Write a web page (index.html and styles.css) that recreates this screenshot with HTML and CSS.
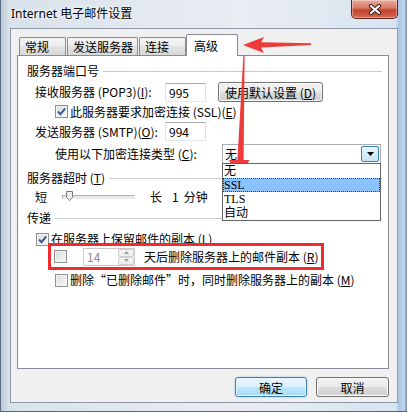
FILE: index.html
```html
<!DOCTYPE html>
<html lang="zh-CN">
<head>
<meta charset="utf-8">
<title>Internet 电子邮件设置</title>
<link rel="stylesheet" href="styles.css">
</head>
<body>
<div class="window">
  <div class="titlebar">
    <span class="title">Internet 电子邮件设置</span>
    <div class="close">
      <svg width="14" height="11" viewBox="0 0 14 11"><path d="M3 2 L11 9 M11 2 L3 9" stroke="#3a1b18" stroke-width="4.2" stroke-linecap="round" fill="none"/><path d="M3 2 L11 9 M11 2 L3 9" stroke="#ffffff" stroke-width="2.2" stroke-linecap="round" fill="none"/></svg>
    </div>
  </div>
  <div class="dialog">
    <div class="tabs">
      <div class="tab">常规</div>
      <div class="tab">发送服务器</div>
      <div class="tab">连接</div>
      <div class="tab active">高级</div>
    </div>
    <div class="panel">
      <div class="group">服务器端口号</div>
      <div class="row r-pop">
        <span class="label">接收服务器 (POP3)(<u>I</u>):</span>
        <span class="textbox">995</span>
        <button class="btn btn-defaults">使用默认设置 (<u>D</u>)</button>
      </div>
      <div class="row r-ssl">
        <span class="check"><svg width="11" height="11" viewBox="0 0 11 11"><path d="M2 5.5 L4.5 8.2 L9.2 2.3" stroke="#3d5a96" stroke-width="1.9" fill="none"/></svg></span>
        <span>此服务器要求加密连接 (SSL)(<u>E</u>)</span>
      </div>
      <div class="row r-smtp">
        <span class="label">发送服务器 (SMTP)(<u>O</u>):</span>
        <span class="textbox">994</span>
      </div>
      <div class="row r-enc">
        <span class="label2">使用以下加密连接类型 (<u>C</u>):</span>
        <div class="combo">
          <span class="combo-val">无</span>
          <span class="combo-btn"><svg width="7" height="4" viewBox="0 0 7 4"><path d="M0 0 H7 L3.5 4 Z" fill="#000"/></svg></span>
          <ul class="droplist">
            <li>无</li>
            <li class="sel">SSL</li>
            <li>TLS</li>
            <li>自动</li>
          </ul>
        </div>
      </div>
      <div class="group g-timeout">服务器超时 (<u>T</u>)</div>
      <div class="row r-slider">
        <span>短</span>
        <div class="slider">
          <svg class="thumb" width="7" height="10" viewBox="0 0 7 10"><path d="M0.5 0.5 H6.5 V6.5 L3.5 9.5 L0.5 6.5 Z" fill="#ececec" stroke="#7a7a7a"/></svg>
        </div>
        <span>长</span>
        <span class="num">1</span>
        <span class="unit">分钟</span>
      </div>
      <div class="group g-deliver">传递</div>
      <div class="row r-keep">
        <span class="check"><svg width="11" height="11" viewBox="0 0 11 11"><path d="M2 5.5 L4.5 8.2 L9.2 2.3" stroke="#3d5a96" stroke-width="1.9" fill="none"/></svg></span>
        <span>在服务器上保留邮件的副本 (<u>L</u>)</span>
      </div>
      <div class="row r-days">
        <span class="check"></span>
        <div class="spin">
          <span class="spin-val">14</span>
          <span class="spin-btns">
            <span class="spin-b"><svg width="5" height="3" viewBox="0 0 5 3"><path d="M0 3 L2.5 0 L5 3 Z" fill="#a0a0a0"/></svg></span>
            <span class="spin-b"><svg width="5" height="3" viewBox="0 0 5 3"><path d="M0 0 L2.5 3 L5 0 Z" fill="#a0a0a0"/></svg></span>
          </span>
        </div>
        <span class="days-text">天后删除服务器上的邮件副本 (<u>R</u>)</span>
      </div>
      <div class="row r-del">
        <span class="check"></span>
        <span>删除“已删除邮件”时，同时删除服务器上的副本 (<u>M</u>)</span>
      </div>
    </div>
    <div class="buttons">
      <button class="btn btn-ok">确定</button>
      <button class="btn btn-cancel">取消</button>
    </div>
  </div>
  <svg class="arrows" width="407" height="412" viewBox="0 0 407 412">
    <polygon points="243,45 264,37 261,42.3 311,43.2 311,45 261,47.6 264,53" fill="#ef3a3a"/>
    <polygon points="243.4,55 244.6,55 243.6,160 249.6,160 238,178 229,160 237.4,160" fill="#ef3a3a"/>
  </svg>
</div>
</body>
</html>
```

FILE: styles.css
```css
* { box-sizing: border-box; }
html, body { margin: 0; padding: 0; }
body {
  width: 407px;
  height: 412px;
  overflow: hidden;
  font-family: "Noto Sans CJK SC", "Noto Sans", sans-serif;
  font-size: 12px;
  color: #000;
  background: #fff;
}
.window {
  position: relative;
  width: 407px;
  height: 412px;
  padding: 0 9px 0 10px;
  display: flex;
  flex-direction: column;
  background: linear-gradient(to right, #b9c7d6 0, #d9e2eb 9px, #e9edf2 60%, #d8e4f0 396px, #a9c5e3 399px, #c3d8ee 404px, #6f88a5 407px);
  box-shadow: inset 1px 0 0 #5a6c82, inset 0 -1px 0 #4f6682;
}
.titlebar {
  height: 28px;
  flex: none;
  display: flex;
  align-items: flex-start;
}
.title {
  padding-left: 1px;
  line-height: 28px;
  font-family: "Noto Sans", "Noto Sans CJK SC", sans-serif;
  font-size: 12px;
  text-shadow: 0 0 5px #fff, 0 0 2px #fff;
}
.close {
  margin-left: auto;
  width: 47px;
  height: 19px;
  border: 1px solid #5e2620;
  border-top: none;
  border-radius: 0 0 5px 5px;
  background: linear-gradient(#e8ab9c, #d87866 45%, #c5412f 55%, #d06a52);
  box-shadow: inset 0 0 0 1px rgba(255, 255, 255, 0.35);
  display: flex;
  align-items: center;
  justify-content: center;
}
.dialog {
  height: 375px;
  flex: none;
  border: 1px solid #8d99a8;
  background: #f0f0f0;
  padding: 5px 8px 0 6px;
  display: flex;
  flex-direction: column;
}
.tabs {
  display: flex;
  align-items: flex-end;
  height: 21px;
  flex: none;
  padding-left: 2px;
}
.tab {
  height: 18px;
  line-height: 17px;
  padding: 0 4px 0 5px;
  min-width: 47px;
  border: 1px solid #898c95;
  border-bottom: none;
  border-radius: 2px 2px 0 0;
  background: linear-gradient(#f4f4f4, #ececec 50%, #e2e2e2 50%, #d9d9d9);
  margin-right: 1px;
  white-space: nowrap;
}
.tab.active {
  position: relative;
  z-index: 1;
  height: 22px;
  line-height: 21px;
  margin-bottom: -1px;
  margin-left: -1px;
  padding-left: 7px;
  min-width: 52px;
  background: #fff;
}
.panel {
  height: 314px;
  flex: none;
  background: #fff;
  border: 1px solid #898c95;
  padding: 8px 6px 0 9px;
  display: flex;
  flex-direction: column;
}
.group {
  display: flex;
  align-items: center;
  height: 14px;
  line-height: 14px;
  white-space: nowrap;
}
.group::after {
  content: "";
  flex: 1;
  height: 1px;
  background: #c6cbd0;
  margin-left: 4px;
}
.g-timeout { margin-top: 7px; }
.g-deliver { margin-top: 6px; }
.row {
  display: flex;
  align-items: center;
  line-height: 14px;
  white-space: nowrap;
}
.r-pop { margin: 4px 0 0 8px; height: 20px; }
.r-ssl { margin: 3px 0 0 28px; height: 13px; }
.r-smtp { margin: 4px 0 0 8px; height: 19px; }
.r-enc { margin: 3px 0 0 28px; height: 20px; }
.r-slider { margin: 4px 0 0 8px; height: 16px; }
.r-keep { margin: 7px 0 0 9px; height: 14px; }
.r-days {
  margin: -3px 0 0 21px;
  width: 276px;
  height: 27px;
  border: 3px solid #ee2b30;
  padding-left: 3px;
}
.r-del { margin: 3px 0 0 28px; height: 14px; }
.label { width: 130px; }
.label2 { width: 167px; }
.textbox {
  width: 41px;
  height: 19px;
  border: 1px solid #abadb3;
  border-color: #abadb3 #dbdfe6 #e3e9ef #e2e3ea;
  padding-left: 3px;
  line-height: 17px;
  background: #fff;
}
.btn {
  font: inherit;
  color: #000;
  height: 20px;
  padding: 0;
  border: 1px solid #707070;
  border-radius: 3px;
  background: linear-gradient(#f2f2f2, #ebebeb 50%, #dddddd 50%, #cfcfcf);
  box-shadow: inset 0 0 0 1px #fcfcfc;
  line-height: 17px;
  white-space: nowrap;
}
.btn-defaults { width: 105px; margin-left: 12px; }
.btn-ok {
  width: 72px;
  border-color: #3c7fb1;
  background: linear-gradient(#eaf6fd, #d9f0fc 50%, #bee6fd 50%, #a7d9f5);
  box-shadow: inset 0 0 0 1px #e8f6fd, 0 0 2px #7fc7f0;
}
.btn-cancel { width: 73px; }
.buttons {
  display: flex;
  justify-content: flex-end;
  gap: 9px;
  margin-top: 8px;
}
.check {
  width: 13px;
  height: 13px;
  flex: none;
  border: 1px solid #8f8f8f;
  background: linear-gradient(135deg, #d9dbde, #f9f9f9);
  box-shadow: inset 0 0 0 1px #f4f4f4;
  margin-right: 2px;
  display: flex;
  align-items: center;
  justify-content: center;
}
.combo {
  position: relative;
  width: 159px;
  height: 20px;
  border: 1px solid #abadb3;
  background: #fff;
  display: flex;
  align-items: center;
}
.combo-val { flex: 1; padding-left: 2px; }
.combo-btn {
  width: 18px;
  height: 16px;
  margin-right: 1px;
  border: 1px solid #3c7fb1;
  border-radius: 2px;
  background: linear-gradient(#e5f4fc, #c4e5f6);
  display: flex;
  align-items: center;
  justify-content: center;
}
.droplist {
  position: absolute;
  top: 18px;
  left: -1px;
  width: 159px;
  margin: 0;
  padding: 0;
  list-style: none;
  border: 1px solid #646464;
  background: #fff;
  z-index: 2;
}
.droplist li {
  height: 14px;
  line-height: 14px;
  padding-left: 1px;
  font-family: "Liberation Serif", "Noto Sans CJK SC", serif;
  font-size: 12px;
}
.droplist li.sel {
  background: #8dc3fc;
  outline: 1px dotted #3a3a3a;
  outline-offset: -1px;
}
.slider {
  position: relative;
  width: 73px;
  height: 4px;
  margin: 0 15px;
  border: 1px solid #b0b0b0;
  border-color: #b0b0b0 #e7eaea #e7eaea #b0b0b0;
  background: #e7eaea;
}
.thumb {
  position: absolute;
  left: 3px;
  top: -5px;
}
.num { margin-left: 10px; }
.unit { margin-left: 5px; }
.spin {
  width: 52px;
  height: 18px;
  margin-left: 14px;
  border: 1px solid #c9c9c9;
  background: #fff;
  color: #8d8d8d;
  padding-left: 3px;
  display: flex;
  align-items: center;
}
.spin-val { flex: 1; }
.spin-btns {
  width: 16px;
  height: 16px;
  display: flex;
  flex-direction: column;
}
.spin-b {
  flex: 1;
  border: 1px solid #d0d0d0;
  border-radius: 2px;
  background: linear-gradient(#f7f7f7, #ececec);
  display: flex;
  align-items: center;
  justify-content: center;
}
.days-text { margin-left: 9px; }
.arrows {
  position: absolute;
  left: 0;
  top: 0;
  pointer-events: none;
}
```
